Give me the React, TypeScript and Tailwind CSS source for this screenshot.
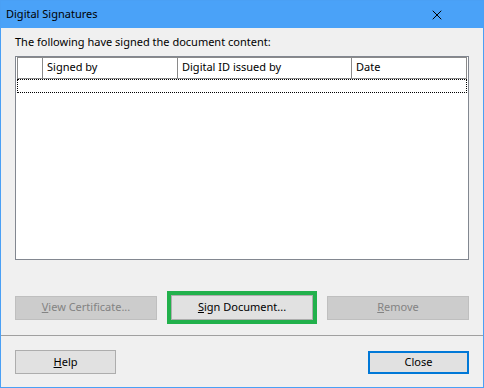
import { X } from 'lucide-react'

const font = { fontFamily: '"Noto Sans", "Open Sans", sans-serif' }

const columns = [
  { label: '', w: 'w-[26px]' },
  { label: 'Signed by', w: 'w-[135px]' },
  { label: 'Digital ID issued by', w: 'w-[174px]' },
  { label: 'Date', w: 'flex-1' },
]

function Btn({ children, disabled, primary, className = '' }: { children: React.ReactNode; disabled?: boolean; primary?: boolean; className?: string }) {
  const look = disabled
    ? 'bg-[#cccccc] border border-[#bfbfbf] text-[#838383]'
    : primary
      ? 'bg-[#e1e1e1] border-2 border-[#0078d7] text-black'
      : 'bg-[#e1e1e1] border border-[#adadad] text-black'
  return (
    <div className={`flex items-center justify-center text-[11px] ${look} ${className}`}>
      {children}
    </div>
  )
}

export default function App() {
  return (
    <div style={font} className="w-[484px] h-[388px] flex flex-col border border-[#4aa0f5] bg-[#f0f0f0]">
      {/* title bar */}
      <div className="h-[27px] bg-[#4aa2f8] flex items-center justify-between pl-[5px] pr-[38px] shrink-0">
        <span className="text-[11px] text-black">Digital Signatures</span>
        <X className="w-[16px] h-[16px] text-black" strokeWidth={1.5} />
      </div>

      <div className="flex flex-col px-[14px] pt-[5px]">
        <p className="text-[11px] text-black leading-[18px]">The following have signed the document content:</p>

        {/* list */}
        <div className="mt-[5px] h-[204px] border border-[#828790] bg-white">
          <div className="flex h-[22px] border-y border-[#8a8a8a] mx-[1px]">
            {columns.map((c, i) => (
              <div
                key={i}
                className={`${c.w} h-full flex items-center pl-[4px] pb-[2px] text-[11px] text-black border-r border-[#8a8a8a] ${i === 0 ? 'border-l' : ''}`}
              >
                {c.label}
              </div>
            ))}
          </div>
          <div className="mx-[1px] h-[14px] border border-dotted border-black" />
        </div>

        {/* action buttons */}
        <div className="flex items-center justify-between mt-[31px]">
          <Btn disabled className="w-[142px] h-[24px]">
            <span><u>V</u>iew Certificate...</span>
          </Btn>
          <div className="w-[150px] h-[33px] border-4 border-[#22b14c] flex">
            <Btn className="flex-1">
              <span><u>S</u>ign Document...</span>
            </Btn>
          </div>
          <Btn disabled className="w-[142px] h-[24px]">
            <span><u>R</u>emove</span>
          </Btn>
        </div>
      </div>

      <div className="mt-[11px] border-t border-[#a0a0a0]" />

      <div className="flex items-center justify-between px-[14px] pt-[14px]">
        <Btn className="w-[101px] h-[24px]">
          <span><u>H</u>elp</span>
        </Btn>
        <Btn primary className="w-[101px] h-[23px]">
          Close
        </Btn>
      </div>
    </div>
  )
}
